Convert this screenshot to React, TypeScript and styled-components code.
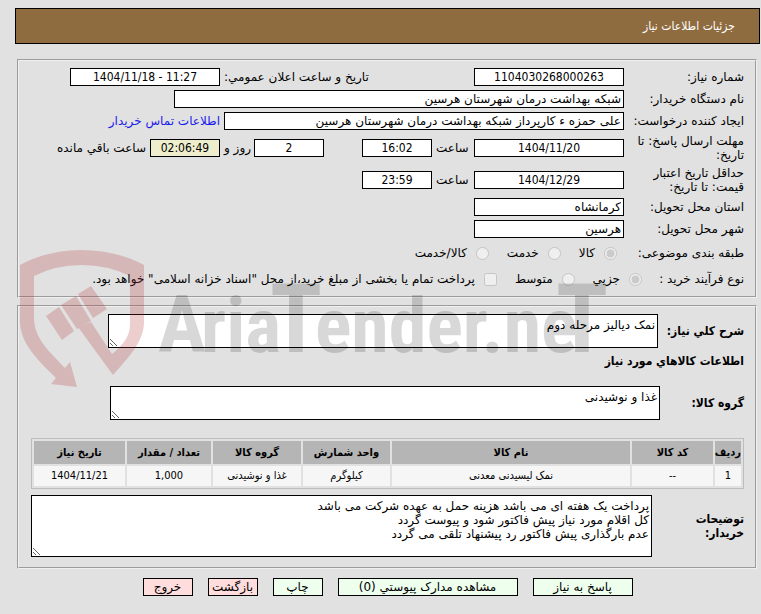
import React from 'react';
import styled, { createGlobalStyle } from 'styled-components';

const textFont = '"DejaVu Sans", "Liberation Sans", sans-serif';
const narrowFont = '"DejaVu Sans Condensed", "DejaVu Sans", sans-serif';

const GlobalStyle = createGlobalStyle`
  *, *::before, *::after { box-sizing: border-box; }
  body {
    margin: 0;
    background: #e1e1e1;
    color: #000;
    font: 12px/14px ${textFont};
  }
`;

const Page = styled.main`
  position: relative;
  padding: 8px 1px 16px 15px;
`;

const Header = styled.h1`
  display: flex;
  align-items: center;
  height: 36px;
  margin: 0 0 15px;
  padding: 0 24px;
  border: 1px solid #000;
  background: #8f6c40;
  color: #fff;
  font: 400 12px/14px ${narrowFont};
`;

const Section = styled.fieldset<{ $top: number }>`
  min-width: 0;
  margin: 0 3px 7px 2px;
  padding: ${(p) => p.$top}px 11px 4px 12px;
  border: 2px groove #f0f0f0;
`;

const Row = styled.div<{ $tall?: boolean }>`
  display: flex;
  align-items: center;
  min-height: ${(p) => (p.$tall ? 32 : 22)}px;
`;

const ChoiceRow = styled(Row)`
  min-height: 26px;
`;

const Label = styled.label`
  flex: 0 0 120px;
  padding-inline-end: 8px;
`;

const ChoiceLabel = styled.span<{ $width: number }>`
  flex: 0 0 ${(p) => p.$width}px;
`;

const Slot = styled.label<{ $width: number }>`
  flex: 0 0 ${(p) => p.$width}px;
  text-align: end;
  padding-inline-end: 4px;
  white-space: nowrap;
`;

const Remaining = styled.span`
  padding-inline-start: 4px;
  white-space: nowrap;
`;

const Field = styled.input<{ $width: number; $center?: boolean; $timer?: boolean }>`
  width: ${(p) => p.$width}px;
  min-width: 0;
  height: 18px;
  margin: 0;
  padding: 0 2px;
  border: 1px solid #000;
  border-radius: 0;
  background: ${(p) => (p.$timer ? '#eeeecc' : '#fff')};
  color: #000;
  font: 12px/14px ${(p) => (p.$center ? narrowFont : textFont)};
  text-align: ${(p) => (p.$center ? 'center' : 'start')};
`;

const DayField = styled(Field)`
  margin-inline-start: 38px;
`;

const ContactLink = styled.a`
  padding-inline-start: 4px;
  color: #1a1aee;
  text-decoration: none;
  white-space: nowrap;
`;

const Choice = styled.label`
  display: flex;
  align-items: center;
  gap: 9px;
  margin-inline-end: 18px;
  white-space: nowrap;

  input {
    flex: none;
    width: 13px;
    height: 13px;
    margin: 0;
  }
`;

const TextRow = styled.div<{ $after: number }>`
  display: flex;
  align-items: center;
  margin-bottom: ${(p) => p.$after}px;
`;

const BoldLabel = styled.label<{ $width: number }>`
  flex: 0 0 ${(p) => p.$width}px;
  font: 700 12px/14px ${narrowFont};
`;

const Area = styled.textarea<{ $width?: number; $height: number }>`
  flex: ${(p) => (p.$width ? `0 1 ${p.$width}px` : '1 1 0')};
  display: block;
  min-width: 0;
  height: ${(p) => p.$height}px;
  margin: 0;
  padding: 3px 2px;
  border: 1px solid #000;
  border-radius: 0;
  background: #fff;
  color: #000;
  font: 12px/14px ${textFont};
`;

const SubHeading = styled.h2`
  margin: 0 0 18px;
  font: 700 12px/14px ${narrowFont};
`;

const Items = styled.table`
  width: 100%;
  margin-bottom: 6px;
  border: 1px solid #bdbdbd;
  border-spacing: 2px;
  table-layout: fixed;
  text-align: center;
  font: 11px/14px ${narrowFont};

  th {
    height: 23px;
    padding: 0;
    background: #b5b5b5;
    white-space: nowrap;
  }

  td {
    height: 20px;
    padding: 0;
    background: #f6f6f6;
    white-space: nowrap;
  }
`;

const Actions = styled.div`
  display: flex;
  justify-content: center;
  gap: 15px;
  margin-top: 9px;
`;

const ActionButton = styled.button<{ $width: number; $danger?: boolean }>`
  width: ${(p) => p.$width}px;
  height: 18px;
  padding: 0;
  border: 1px solid #000;
  border-radius: 0;
  background: ${(p) => (p.$danger ? '#ffdddd' : '#eeffee')};
  color: #000;
  font: 12px/14px ${textFont};
  white-space: nowrap;
`;

const Watermark = styled.svg`
  position: absolute;
  top: 245px;
  left: 15px;
  width: 600px;
  height: 150px;
  pointer-events: none;
`;

const columns = [
  { title: 'ردیف', width: 26 },
  { title: 'کد کالا', width: 81 },
  { title: 'نام کالا', width: 238 },
  { title: 'واحد شمارش', width: 87 },
  { title: 'گروه کالا', width: 88 },
  { title: 'تعداد / مقدار', width: 84 },
  { title: 'تاریخ نیاز', width: 91 },
];

const items = [['1', '--', 'نمک لیسیدنی معدنی', 'کیلوگرم', 'غذا و نوشیدنی', '1,000', '1404/11/21']];

const buyerNotes = `پرداخت یک هفته ای می باشد هزینه حمل به عهده شرکت می باشد
کل اقلام مورد نیاز پیش فاکتور شود و پیوست گردد
عدم بارگذاری پیش فاکتور رد پیشنهاد تلقی می گردد`;

function BrandMark() {
  return (
    <Watermark viewBox="15 245 600 150" aria-hidden="true">
      <g fill="rgb(177,46,50)" opacity="0.23">
        <path d="M20 265Q48 250 81 250Q116 250 144 265V322C144 342 128 358 113 375L78 327L91 322L112 354C122 346 130 337 130 325V276Q108 265 81 265Q56 265 34 276V318C34 339 51 353 65 368L70 362L77 387L51 384L56 378C39 361 20 344 20 321Z" />
        <path d="M46 316L59 307L74 331L62 340ZM61 305L76 296L91 321L77 329ZM78 294L91 286L107 309L93 318Z" />
      </g>
      <g opacity="0.15" direction="ltr" fontFamily='"Roboto Condensed", "Roboto", sans-serif' fontWeight="700">
        <text y="352">
          <tspan x="158" fontSize="80">A</tspan>
          <tspan x="201" fontSize="76">ria</tspan>
          <tspan x="270" fontSize="96">T</tspan>
          <tspan x="315" fontSize="76">ender.ne</tspan>
          <tspan x="556" fontSize="96">T</tspan>
        </text>
      </g>
    </Watermark>
  );
}

export default function App() {
  return (
    <Page dir="rtl" lang="fa">
      <GlobalStyle />
      <Header>جزئیات اطلاعات نیاز</Header>

      <Section $top={5}>
        <Row>
          <Label htmlFor="need-no">شماره نیاز:</Label>
          <Field id="need-no" $width={150} $center readOnly value="1104030268000263" />
          <Slot $width={254} htmlFor="announced">تاریخ و ساعت اعلان عمومي:</Slot>
          <Field id="announced" dir="ltr" $width={150} $center readOnly value="1404/11/18 - 11:27" />
        </Row>
        <Row>
          <Label htmlFor="buyer">نام دستگاه خریدار:</Label>
          <Field id="buyer" $width={450} readOnly value="شبکه بهداشت درمان شهرستان هرسین" />
        </Row>
        <Row>
          <Label htmlFor="creator">ایجاد کننده درخواست:</Label>
          <Field id="creator" $width={400} readOnly value="علی حمزه ء کارپرداز شبکه بهداشت درمان شهرستان هرسین" />
          <ContactLink href="#contact">اطلاعات تماس خریدار</ContactLink>
        </Row>
        <Row $tall>
          <Label htmlFor="deadline">مهلت ارسال پاسخ: تا تاریخ:</Label>
          <Field id="deadline" dir="ltr" $width={150} $center readOnly value="1404/11/20" />
          <Slot $width={42} htmlFor="deadline-time">ساعت</Slot>
          <Field id="deadline-time" $width={70} $center readOnly value="16:02" />
          <DayField id="days" $width={70} $center readOnly value="2" />
          <Slot $width={34} htmlFor="days">روز و</Slot>
          <Field aria-label="ساعت باقي مانده" $width={70} $center $timer readOnly value="02:06:49" />
          <Remaining>ساعت باقي مانده</Remaining>
        </Row>
        <Row $tall>
          <Label htmlFor="validity">حداقل تاریخ اعتبار قیمت: تا تاریخ:</Label>
          <Field id="validity" dir="ltr" $width={150} $center readOnly value="1404/12/29" />
          <Slot $width={42} htmlFor="validity-time">ساعت</Slot>
          <Field id="validity-time" $width={70} $center readOnly value="23:59" />
        </Row>
        <Row>
          <Label htmlFor="province">استان محل تحویل:</Label>
          <Field id="province" $width={150} readOnly value="کرمانشاه" />
        </Row>
        <Row>
          <Label htmlFor="city">شهر محل تحویل:</Label>
          <Field id="city" $width={150} readOnly value="هرسین" />
        </Row>
        <ChoiceRow>
          <ChoiceLabel $width={127}>طبقه بندی موضوعی:</ChoiceLabel>
          <Choice><input type="radio" name="subject" disabled defaultChecked />کالا</Choice>
          <Choice><input type="radio" name="subject" disabled />خدمت</Choice>
          <Choice><input type="radio" name="subject" disabled />کالا/خدمت</Choice>
        </ChoiceRow>
        <ChoiceRow>
          <ChoiceLabel $width={102}>نوع فرآیند خرید :</ChoiceLabel>
          <Choice><input type="radio" name="process" disabled defaultChecked />جزیي</Choice>
          <Choice><input type="radio" name="process" disabled />متوسط</Choice>
          <Choice><input type="checkbox" disabled />پرداخت تمام یا بخشی از مبلغ خرید،از محل "اسناد خزانه اسلامی" خواهد بود.</Choice>
        </ChoiceRow>
      </Section>

      <Section $top={7}>
        <TextRow $after={6}>
          <BoldLabel $width={86} htmlFor="summary">شرح کلي نیاز:</BoldLabel>
          <Area id="summary" $width={550} $height={34} readOnly value="نمک دیالیز مرحله دوم" />
        </TextRow>
        <SubHeading>اطلاعات کالاهاي مورد نیاز</SubHeading>
        <TextRow $after={18}>
          <BoldLabel $width={84} htmlFor="group">گروه کالا:</BoldLabel>
          <Area id="group" $width={550} $height={34} readOnly value="غذا و نوشیدنی" />
        </TextRow>
        <Items>
          <colgroup>
            {columns.map((c) => <col key={c.title} width={c.width} />)}
          </colgroup>
          <thead>
            <tr>{columns.map((c) => <th key={c.title} scope="col">{c.title}</th>)}</tr>
          </thead>
          <tbody>
            {items.map((row) => (
              <tr key={row[0]}>{row.map((cell, i) => <td key={columns[i].title}>{cell}</td>)}</tr>
            ))}
          </tbody>
        </Items>
        <TextRow $after={6}>
          <BoldLabel $width={92} htmlFor="notes">توضیحات<br />خریدار:</BoldLabel>
          <Area id="notes" $height={62} readOnly value={buyerNotes} />
        </TextRow>
      </Section>

      <Actions>
        <ActionButton type="button" $width={100}>پاسخ به نیاز</ActionButton>
        <ActionButton type="button" $width={180}>مشاهده مدارک پیوستي (0)</ActionButton>
        <ActionButton type="button" $width={50}>چاپ</ActionButton>
        <ActionButton type="button" $width={50} $danger>بازگشت</ActionButton>
        <ActionButton type="button" $width={50} $danger>خروج</ActionButton>
      </Actions>

      <BrandMark />
    </Page>
  );
}
